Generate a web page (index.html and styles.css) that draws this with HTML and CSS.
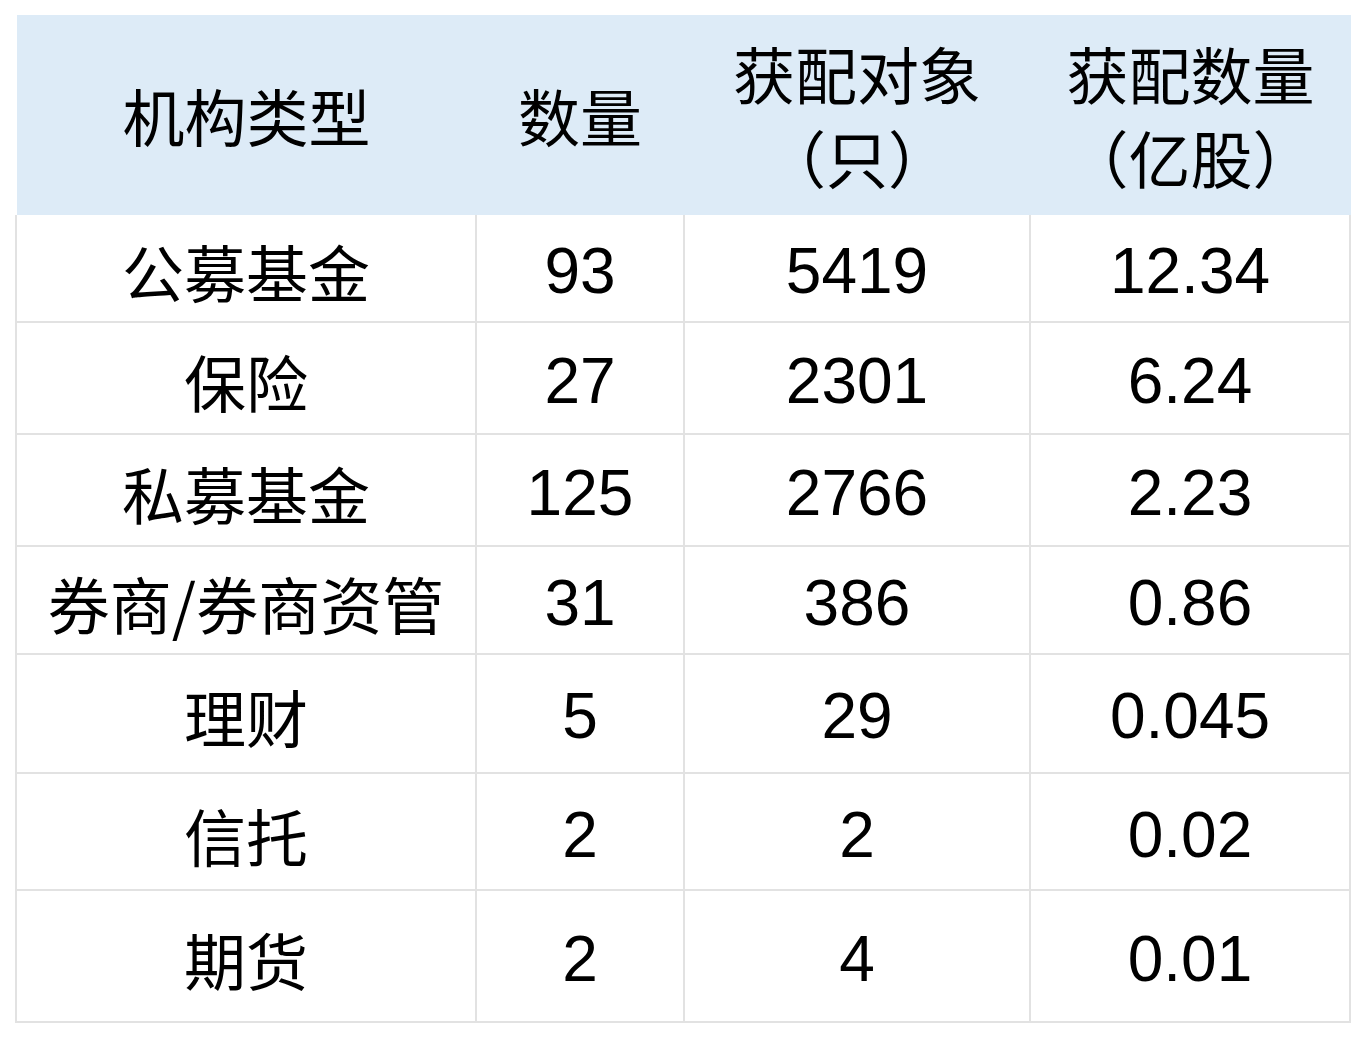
FILE: index.html
```html
<!DOCTYPE html>
<html lang="zh-CN">
<head>
<meta charset="utf-8">
<title>机构获配情况</title>
<link rel="stylesheet" href="styles.css">
</head>
<body>
<div class="sheet">
  <div class="head">
    <div class="hcell cjk">机构类型</div>
    <div class="hcell cjk">数量</div>
    <div class="hcell cjk two"><span>获配对象</span><span>（只）</span></div>
    <div class="hcell cjk two"><span>获配数量</span><span>（亿股）</span></div>
  </div>
  <div class="grid">
    <div class="cell cjk">公募基金</div><div class="cell num">93</div><div class="cell num">5419</div><div class="cell num">12.34</div>
    <div class="cell cjk">保险</div><div class="cell num">27</div><div class="cell num">2301</div><div class="cell num">6.24</div>
    <div class="cell cjk">私募基金</div><div class="cell num">125</div><div class="cell num">2766</div><div class="cell num">2.23</div>
    <div class="cell cjk">券商/券商资管</div><div class="cell num">31</div><div class="cell num">386</div><div class="cell num">0.86</div>
    <div class="cell cjk">理财</div><div class="cell num">5</div><div class="cell num">29</div><div class="cell num">0.045</div>
    <div class="cell cjk">信托</div><div class="cell num">2</div><div class="cell num">2</div><div class="cell num">0.02</div>
    <div class="cell cjk">期货</div><div class="cell num">2</div><div class="cell num">4</div><div class="cell num">0.01</div>
  </div>
</div>
</body>
</html>
```
FILE: styles.css
```css
html, body {
  margin: 0;
  padding: 0;
  background: #ffffff;
}
body {
  font-family: "Liberation Sans", "Noto Sans CJK SC", sans-serif;
  color: #000000;
}
.sheet {
  margin: 15px 0 0 15px;
  width: 1336px;
}
.head {
  margin-left: 2px;
  width: 1334px;
  height: 200px;
  background: #ddebf7;
  display: grid;
  grid-template-columns: 459px 208px 346px 321px;
}
.hcell {
  display: flex;
  flex-direction: column;
  align-items: center;
  justify-content: center;
  padding-top: 0;
  box-sizing: border-box;
}
.hcell.two {
  line-height: 84px;
}
.grid {
  background: #e2e2e2;
  padding: 0 2px 2px 2px;
  display: grid;
  gap: 2px;
  grid-template-columns: 458px 206px 344px 318px;
  grid-template-rows: 105.5px 110px 110px 106px 117.5px 115px 129.5px;
}
.cell {
  background: #ffffff;
  display: flex;
  align-items: center;
  justify-content: center;
  padding-top: 6px;
  box-sizing: border-box;
}
.cjk {
  font-family: "Noto Sans CJK SC", sans-serif;
  font-size: 62px;
  font-weight: 400;
  line-height: 1;
}
.num {
  font-family: "Liberation Sans", Arial, sans-serif;
  font-size: 64px;
  line-height: 1;
}
```
